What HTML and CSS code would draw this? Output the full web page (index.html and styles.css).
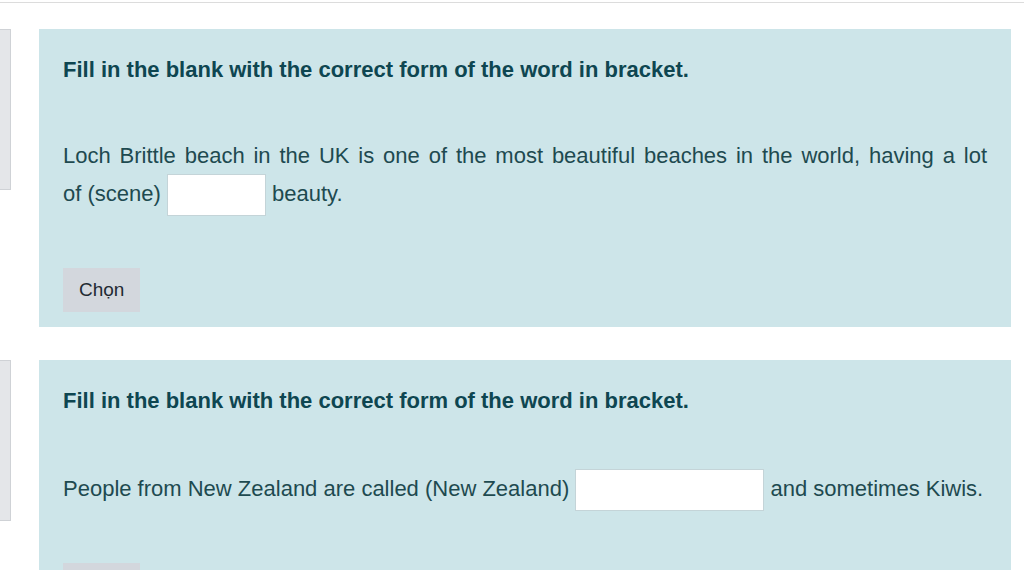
FILE: index.html
```html
<!DOCTYPE html>
<html lang="vi">
  <head>
    <meta charset="utf-8" />
    <meta name="viewport" content="width=device-width, initial-scale=1" />
    <title>Fill in the blank</title>
    <link rel="stylesheet" href="styles.css">
  </head>
  <body>
    <div class="topline"></div>

    <div class="question">
      <div class="info"></div>
      <div class="content">
        <div class="qtext">Fill in the blank with the correct form of the word in bracket.</div>
        <p class="passage">
          Loch Brittle beach in the UK is one of the most beautiful beaches in the world, having a lot
          of&nbsp;(scene) <input type="text" class="blank blank-short" /> beauty.
        </p>
        <button type="button" class="check-button">Chọn</button>
      </div>
    </div>

    <div class="question">
      <div class="info"></div>
      <div class="content">
        <div class="qtext">Fill in the blank with the correct form of the word in bracket.</div>
        <p class="passage">
          People from New Zealand are called (New Zealand) <input type="text" class="blank blank-long" /> and sometimes Kiwis.
        </p>
        <button type="button" class="check-button">Chọn</button>
      </div>
    </div>
  </body>
</html>
```
FILE: styles.css
```css
body {
  margin: 0;
  background: #ffffff;
  font-family: "Liberation Sans", Arial, sans-serif;
  color: #1e4a50;
  overflow: hidden;
}

.topline {
  height: 2px;
  border-bottom: 1px solid #dcdcdc;
  margin-bottom: 26px;
}

.question {
  display: flex;
  align-items: flex-start;
  margin-bottom: 33px;
}

.info {
  width: 10px;
  height: 159px;
  background-color: #e4e6e9;
  border: 1px solid #cfd2d6;
  border-left: none;
  flex-shrink: 0;
}

.content {
  margin-left: 28px;
  width: 972px;
  background-color: #cde5e9;
  padding: 26px 24px 15px 24px;
  box-sizing: border-box;
}

.qtext {
  font-weight: bold;
  font-size: 22px;
  line-height: 30px;
  color: #0e4651;
}

.passage {
  margin: 53px 0 52px 0;
  font-size: 22px;
  line-height: 36px;
  text-align: justify;
}

.blank {
  height: 42px;
  box-sizing: border-box;
  border: 1px solid #c4d4d8;
  background: #ffffff;
  vertical-align: middle;
  padding: 0 6px;
  font-size: 20px;
}

.blank-short {
  width: 99px;
}

.blank-long {
  width: 189px;
}

.check-button {
  display: block;
  background-color: #d3d7dd;
  color: #1f2a33;
  border: none;
  padding: 0 16px;
  height: 44px;
  font-family: "Liberation Sans", Arial, sans-serif;
  font-size: 19px;
  cursor: pointer;
}
```
